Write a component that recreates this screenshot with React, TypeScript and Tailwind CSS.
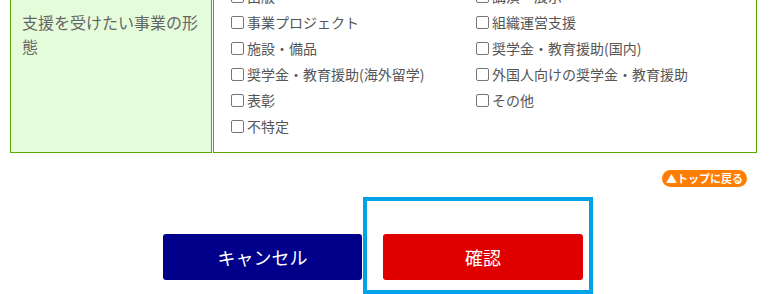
import React from 'react';

const leftItems = ['出版', '事業プロジェクト', '施設・備品', '奨学金・教育援助(海外留学)', '表彰', '不特定'];
const rightItems = ['講演・展示', '組織運営支援', '奨学金・教育援助(国内)', '外国人向けの奨学金・教育援助', 'その他'];

const CheckItem: React.FC<{ label: string }> = ({ label }) => (
  <label className="flex items-center h-[26px] text-[14px] text-[#555] whitespace-nowrap">
    <span className="w-[13px] h-[13px] border border-[#767676] rounded-[2px] bg-white shrink-0" />
    <span className="ml-[3px]">{label}</span>
  </label>
);

export default function App() {
  return (
    <div
      className="w-[778px] h-[294px] overflow-hidden bg-white relative"
      style={{ fontFamily: '"Noto Sans CJK JP", "Noto Sans", sans-serif' }}
    >
      {/* form table, top part scrolled out of view */}
      <div className="ml-[10px] mt-[-31px] w-[747px] flex gap-[1px]">
        <div className="w-[202px] shrink-0 border border-[#5ea600] bg-[#e5fcdb] pt-[40px] pl-[11px] pr-[11px] text-[16px] leading-[24px] text-[#666]">
          支援を受けたい事業の形態
        </div>
        <div className="flex-1 border border-[#5ea600] pt-[13px] pb-[13px] pl-[17px] grid grid-cols-[245px_1fr]">
          <div className="flex flex-col">
            {leftItems.map((item) => (
              <CheckItem key={item} label={item} />
            ))}
          </div>
          <div className="flex flex-col">
            {rightItems.map((item) => (
              <CheckItem key={item} label={item} />
            ))}
          </div>
        </div>
      </div>

      <div className="flex justify-end pr-[31px] mt-[17px]">
        <span className="h-[17px] w-[85px] rounded-full bg-[#ff7d00] text-white text-[11px] font-bold leading-[17px] text-center whitespace-nowrap">
          ▲トップに戻る
        </span>
      </div>

      <div className="flex gap-[21px] ml-[163px] mt-[47px]">
        <button className="w-[199px] h-[46px] rounded-[3px] bg-[#00008b] text-white text-[18px]">
          キャンセル
        </button>
        <button className="w-[200px] h-[46px] rounded-[3px] bg-[#e00000] text-white text-[18px]">
          確認
        </button>
      </div>

      {/* highlight frame over the confirm area */}
      <div className="absolute left-[363px] top-[197px] w-[230px] h-[97px] border-4 border-[#00a3e6]" />
    </div>
  );
}
